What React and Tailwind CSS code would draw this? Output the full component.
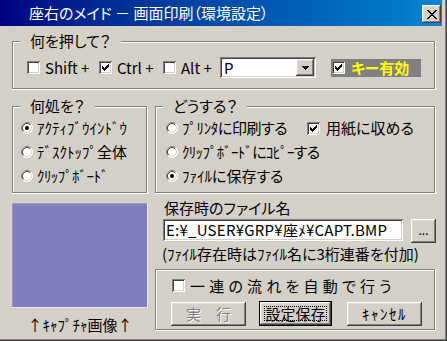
import React from 'react';

const raised =
  'shadow-[inset_-1px_-1px_0_#404040,inset_1px_1px_0_#ffffff,inset_-2px_-2px_0_#808080,inset_2px_2px_0_#e0ddd6]';
const sunken =
  'shadow-[inset_1px_1px_0_#808080,inset_-1px_-1px_0_#ffffff,inset_2px_2px_0_#404040,inset_-2px_-2px_0_#d4d0c8]';
const etched =
  'shadow-[inset_-1px_-1px_0_#ffffff,inset_-2px_1px_0_#808080,inset_1px_-2px_0_#808080,inset_2px_2px_0_#ffffff]';

function CheckBox({ checked }) {
  return (
    <span className={`w-[13px] h-[13px] shrink-0 bg-white flex items-center justify-center ${sunken}`}>
      {checked && (
        <svg width="7" height="7" viewBox="0 0 7 7" shapeRendering="crispEdges">
          <path
            d="M6 0h1v1h-1z M5 1h2v1h-2z M0 2h1v1h-1z M4 2h3v1h-3z M0 3h2v1h-2z M3 3h3v1h-3z M0 4h5v1h-5z M1 5h3v1h-3z M2 6h1v1h-1z"
            fill="#000"
          />
        </svg>
      )}
    </span>
  );
}

function Radio({ checked }) {
  return (
    <svg width="12" height="12" viewBox="0 0 12 12" className="shrink-0">
      <circle cx="6" cy="6" r="5.5" fill="#fff" />
      <path d="M2.11 9.89A5.5 5.5 0 0 1 9.89 2.11" fill="none" stroke="#808080" />
      <path d="M2.82 9.18A4.5 4.5 0 0 1 9.18 2.82" fill="none" stroke="#404040" />
      <path d="M9.89 2.11A5.5 5.5 0 0 1 2.11 9.89" fill="none" stroke="#ffffff" />
      <path d="M9.18 2.82A4.5 4.5 0 0 1 2.82 9.18" fill="none" stroke="#d4d0c8" />
      {checked && <circle cx="6" cy="6" r="2" fill="#000" />}
    </svg>
  );
}

function Group({ label, labelClass = '', className = '', children }) {
  return (
    <div className={`relative ${etched} ${className}`}>
      {label && (
        <span className={`absolute top-[-10px] bg-[#d4d0c8] px-[10px] leading-[20px] ${labelClass}`}>
          {label}
        </span>
      )}
      {children}
    </div>
  );
}

function Button({ children, className = '' }) {
  return (
    <div className={`h-[24px] flex items-center justify-center ${raised} ${className}`}>{children}</div>
  );
}

export default function App() {
  return (
    <div className="w-[447px] h-[341px] bg-[#d4d0c8] overflow-hidden font-['Noto_Sans_CJK_JP',sans-serif] [font-feature-settings:'palt'] text-[15px] leading-[20px] text-black shadow-[inset_-1px_-1px_0_#404040,inset_-2px_-2px_0_#808080]">
      {/* title bar */}
      <div className="h-[26px] mr-[5px] flex items-center pl-[29px] pr-[1px] bg-linear-to-r from-[#000080] to-[#1084d0]">
        <span className="flex-1 text-white">座右のメイド － 画面印刷（環境設定）</span>
        <div className={`w-[19px] h-[18px] mt-[2px] bg-[#d4d0c8] flex items-center justify-center ${raised}`}>
          <svg width="10" height="9" viewBox="0 0 10 9" shapeRendering="crispEdges">
            <path
              d="M0 0h2v1h1v1h1v1h2v-1h1v-1h1v-1h2v1h-1v1h-1v1h-1v1h-1v1h1v1h1v1h1v1h1v1h-2v-1h-1v-1h-1v-1h-2v1h-1v1h-1v1h-2v-1h1v-1h1v-1h1v-1h1v-1h-1v-1h-1v-1h-1z"
              fill="#000"
            />
          </svg>
        </div>
      </div>

      <div className="pl-[12px]">
        {/* 何を押して？ */}
        <Group label="何を押して？" labelClass="left-[8px]" className="mt-[15px] w-[424px] h-[49px] flex items-center pl-[15px] pt-[4px]">
          <div className="w-[72px] flex items-center gap-[5px]">
            <CheckBox />
            <span>Shift +</span>
          </div>
          <div className="w-[64px] flex items-center gap-[5px]">
            <CheckBox checked />
            <span>Ctrl +</span>
          </div>
          <div className="w-[57px] flex items-center gap-[5px]">
            <CheckBox />
            <span>Alt +</span>
          </div>
          <div className={`w-[96px] h-[21px] bg-white flex items-center pl-[4px] pr-[2px] ${sunken}`}>
            <span className="flex-1">P</span>
            <div className={`w-[18px] h-[17px] bg-[#d4d0c8] flex items-center justify-center ${raised}`}>
              <svg width="7" height="4" viewBox="0 0 7 4" shapeRendering="crispEdges">
                <path d="M0 0h7v1h-1v1h-1v1h-1v1h-1v-1h-1v-1h-1v-1h-1z" fill="#000" />
              </svg>
            </div>
          </div>
          <div className="ml-[15px] w-[90px] h-[18px] bg-[#808080] flex items-center pl-[1px] gap-[6px]">
            <CheckBox checked />
            <span className="text-[#ffff00] font-bold">キー有効</span>
          </div>
        </Group>

        {/* 何処を？ / どうする？ */}
        <div className="flex gap-[7px] mt-[16px]">
          <Group label="何処を？" labelClass="left-[8px]" className="w-[136px] h-[88px] flex flex-col pl-[9px] pt-[10px]">
            <div className="h-[24px] flex items-center gap-[4px]">
              <Radio checked />
              <span>ｱｸﾃｨﾌﾞｳｲﾝﾄﾞｳ</span>
            </div>
            <div className="h-[24px] flex items-center gap-[4px]">
              <Radio />
              <span>ﾃﾞｽｸﾄｯﾌﾟ全体</span>
            </div>
            <div className="h-[24px] flex items-center gap-[4px]">
              <Radio />
              <span className="tracking-[-0.6px]">ｸﾘｯﾌﾟﾎﾞｰﾄﾞ</span>
            </div>
          </Group>
          <Group label="どうする？" labelClass="left-[8px]" className="w-[281px] h-[88px] flex flex-col pl-[11px] pt-[10px]">
            <div className="h-[24px] flex items-center">
              <div className="w-[141px] flex items-center gap-[4px]">
                <Radio />
                <span className="tracking-[-0.4px]">ﾌﾟﾘﾝﾀに印刷する</span>
              </div>
              <div className="flex items-center gap-[6px]">
                <CheckBox checked />
                <span>用紙に収める</span>
              </div>
            </div>
            <div className="h-[24px] flex items-center gap-[4px]">
              <Radio />
              <span className="tracking-[-0.7px]">ｸﾘｯﾌﾟﾎﾞｰﾄﾞにｺﾋﾟｰする</span>
            </div>
            <div className="h-[24px] flex items-center gap-[4px]">
              <Radio checked />
              <span>ﾌｧｲﾙに保存する</span>
            </div>
          </Group>
        </div>

        {/* bottom */}
        <div className="flex gap-[7px]">
          <div className="w-[136px] flex flex-col">
            <div className="mt-[9px] h-[105px] bg-[#7f7fbf] shadow-[inset_-1px_-1px_0_#e8e8f0,inset_1px_1px_0_#9a9acc]" />
            <div className="mt-[6px] h-[22px] flex items-center justify-center">↑ｷｬﾌﾟﾁｬ画像↑</div>
          </div>
          <div className="w-[281px] flex flex-col">
            <div className="mt-[2px] h-[23px] flex items-center pl-[9px]">保存時のファイル名</div>
            <div className="flex items-start pl-[8px] gap-[8px]">
              <div className={`w-[240px] h-[22px] bg-white flex items-center pl-[3px] whitespace-nowrap overflow-hidden tracking-[0.25px] ${sunken}`}>
                E:¥_USER¥GRP¥座ﾒ¥CAPT.BMP
              </div>
              <Button className="w-[25px] h-[23px]">
                <span className="text-[12px] leading-none pb-[2px]">...</span>
              </Button>
            </div>
            <div className="h-[22px] flex items-center pl-[7px] whitespace-nowrap">(ﾌｧｲﾙ存在時はﾌｧｲﾙ名に3桁連番を付加)</div>
            <Group className="mt-[4px] h-[62px] flex flex-col pl-[16px] pt-[9px]">
              <div className="h-[15px] flex items-center gap-[5px] pl-[1px]">
                <CheckBox />
                <span className="tracking-[4.2px] whitespace-nowrap">一連の流れを自動で行う</span>
              </div>
              <div className="mt-[8px] flex items-center">
                <Button className="w-[75px]">
                  <span className="text-[#808080] [text-shadow:1px_1px_0_#ffffff]">実　行</span>
                </Button>
                <div className="ml-[13px] w-[73px] h-[25px] border border-black">
                  <div className={`h-full flex items-center justify-center p-[4px] ${raised}`}>
                    <div className="h-full w-full border border-dotted border-black flex items-center justify-center">
                      設定保存
                    </div>
                  </div>
                </div>
                <Button className="ml-[15px] w-[75px]">
                  <span className="tracking-[1.5px]">ｷｬﾝｾﾙ</span>
                </Button>
              </div>
            </Group>
          </div>
        </div>
      </div>
    </div>
  );
}
